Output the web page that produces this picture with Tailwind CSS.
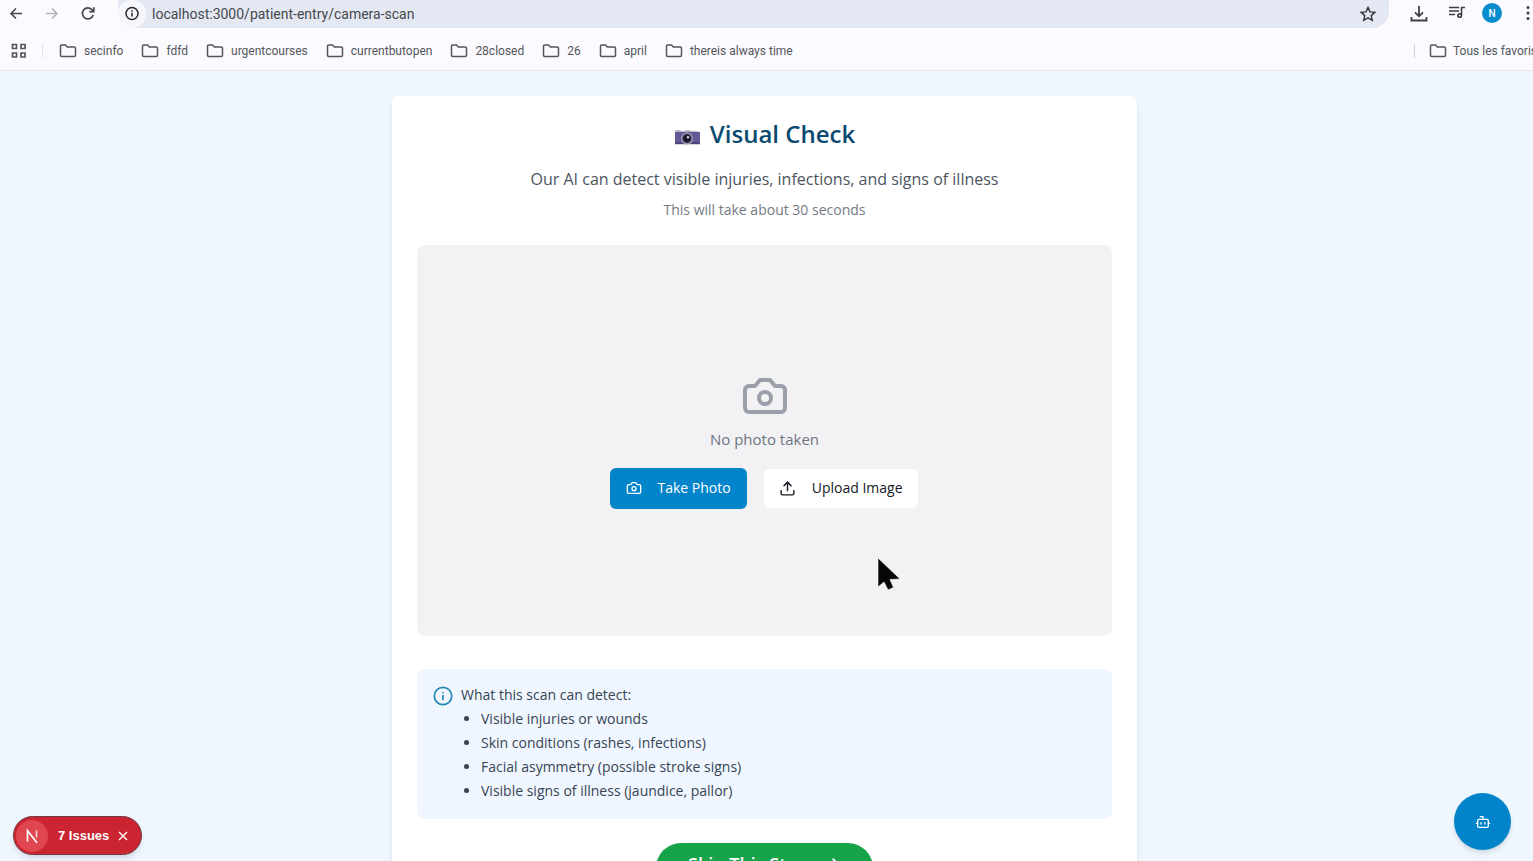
<!DOCTYPE html>
<html lang="en">
<head>
<meta charset="utf-8">
<meta name="viewport" content="width=device-width, initial-scale=1">
<title>Visual Check</title>
<script src="https://cdn.jsdelivr.net/npm/@tailwindcss/browser@4"></script>
</head>
<body class="relative flex h-screen flex-col overflow-hidden bg-[#eff7fe] font-['Open_Sans',sans-serif]">

<svg class="hidden" aria-hidden="true">
  <symbol id="folder" viewBox="0 0 18 16"><path d="M1.500 3.200c0-.7.5-1.200 1.200-1.200h3.800l1.800 2h7c.7 0 1.200.5 1.200 1.200v7.100c0 .7-.5 1.200-1.200 1.200H2.700c-.7 0-1.200-.5-1.200-1.200z" fill="none" stroke="currentColor" stroke-width="1.500" stroke-linejoin="round"/></symbol>
  <symbol id="camera" viewBox="0 0 24 24"><g fill="none" stroke="currentColor" stroke-width="2" stroke-linecap="round" stroke-linejoin="round"><path d="M14.500 4h-5L7 7H4a2 2 0 0 0-2 2v9a2 2 0 0 0 2 2h16a2 2 0 0 0 2-2V9a2 2 0 0 0-2-2h-3l-2.500-3z"/><circle cx="12" cy="13" r="3"/></g></symbol>
</svg>

<!-- Browser toolbar -->
<header class="shrink-0 border-b border-[#e3e6ee] bg-[#fbfaff] font-[Roboto,sans-serif] text-[#54565a]">
  <div class="flex h-7 items-center">
    <div class="flex w-[118px] items-center gap-5 pl-2 text-[#454749]">
      <button aria-label="Back"><svg class="size-4" viewBox="0 0 16 16" fill="none" stroke="currentColor" stroke-width="1.600"><path d="M14 7.500H3M8 2.500l-5 5 5 5"/></svg></button>
      <button aria-label="Forward" class="text-[#b4b5ba]"><svg class="size-4" viewBox="0 0 16 16" fill="none" stroke="currentColor" stroke-width="1.600"><path d="M2 7.500h11M8 2.500l5 5-5 5"/></svg></button>
      <button aria-label="Reload"><svg class="size-4" viewBox="0 0 16 16" fill="none" stroke="currentColor" stroke-width="1.700"><path d="M13.200 9A5.500 5.500 0 1 1 12.300 4L13.500 5.500"/><path d="M13.800 1.300v4.400H9.400"/></svg></button>
    </div>
    <div class="flex h-7 flex-1 items-center rounded-b-2xl bg-[#e4e8f3] pr-3">
      <span class="flex size-7 shrink-0 items-center justify-center rounded-full bg-[#f6f7fc] text-[#28292c]"><svg class="size-4" viewBox="0 0 16 16" fill="none" stroke="currentColor" stroke-width="1.500"><circle cx="8" cy="7.500" r="6"/><path d="M8 6.800v3.700M8 4.200v1.500"/></svg></span>
      <input aria-label="Address" class="ml-1.5 min-w-0 flex-1 bg-transparent text-sm text-[#45484d] outline-none" value="localhost:3000/patient-entry/camera-scan">
      <button aria-label="Bookmark this page" class="text-[#33343a]"><svg class="size-[18px]" viewBox="0 0 18 18" fill="none" stroke="currentColor" stroke-width="1.400"><path d="M9 2.400l2 4.500 4.900.5-3.700 3.200 1.100 4.800L9 12.900l-4.300 2.500 1.100-4.800L2.100 7.400 7 6.900z"/></svg></button>
    </div>
    <div class="flex w-[144px] shrink-0 items-center pb-0.5 pl-[21px] text-[#3d3e43]">
      <button aria-label="Downloads" class="shrink-0"><svg class="size-[18px]" viewBox="0 0 18 18" fill="none" stroke="currentColor" stroke-width="1.800"><path d="M9 2v10M5 8.300l4 4 4-4M1.500 13v3.500h15V13"/></svg></button>
      <button aria-label="Media controls" class="ml-5 shrink-0"><svg class="size-[18px]" viewBox="0 0 18 18" fill="none" stroke="currentColor" stroke-width="1.600"><path d="M1 3.500h10M1 7h10M1 10.500h6M13.500 11V3.500H17"/><circle cx="11.700" cy="11.500" r="1.800"/></svg></button>
      <button aria-label="Profile" class="ml-4 flex size-5 shrink-0 items-center justify-center rounded-full bg-[#078dcb] text-[10px] font-medium text-white">N</button>
      <button aria-label="Menu" class="ml-[17px] shrink-0"><svg class="size-[18px]" viewBox="0 0 18 18" fill="currentColor"><circle cx="9" cy="3.500" r="1.500"/><circle cx="9" cy="9" r="1.500"/><circle cx="9" cy="14.500" r="1.500"/></svg></button>
    </div>
  </div>
  <nav aria-label="Bookmarks" class="flex h-[42px] items-center overflow-hidden pt-[3px] pl-2.5 text-xs whitespace-nowrap">
    <button aria-label="Apps"><svg class="size-[18px]" viewBox="0 0 18 18" fill="none" stroke="currentColor" stroke-width="1.700"><path d="M2.500 2.500h4v4h-4zM11 2.500h4v4h-4zM2.500 11h4v4h-4zM11 11h4v4h-4z"/></svg></button>
    <span class="ml-3.5 h-3.5 w-px bg-[#e3e4ee]"></span>
    <div class="ml-4 flex flex-1 items-center gap-[18px]">
      <a href="#" class="flex items-center gap-[7px]"><svg class="h-4 w-[18px]"><use href="#folder"/></svg>secinfo</a>
      <a href="#" class="flex items-center gap-[7px]"><svg class="h-4 w-[18px]"><use href="#folder"/></svg>fdfd</a>
      <a href="#" class="flex items-center gap-[7px]"><svg class="h-4 w-[18px]"><use href="#folder"/></svg>urgentcourses</a>
      <a href="#" class="flex items-center gap-[7px]"><svg class="h-4 w-[18px]"><use href="#folder"/></svg>currentbutopen</a>
      <a href="#" class="flex items-center gap-[7px]"><svg class="h-4 w-[18px]"><use href="#folder"/></svg>28closed</a>
      <a href="#" class="flex items-center gap-[7px]"><svg class="h-4 w-[18px]"><use href="#folder"/></svg>26</a>
      <a href="#" class="flex items-center gap-[7px]"><svg class="h-4 w-[18px]"><use href="#folder"/></svg>april</a>
      <a href="#" class="flex items-center gap-[7px]"><svg class="h-4 w-[18px]"><use href="#folder"/></svg>thereis always time</a>
    </div>
    <div class="flex w-[119px] shrink-0 items-center">
      <span class="h-3.5 w-px shrink-0 bg-[#cfd0da]"></span>
      <a href="#" class="ml-3.5 flex shrink-0 items-center gap-1.5"><svg class="h-4 w-[18px] shrink-0"><use href="#folder"/></svg>Tous les favoris</a>
    </div>
  </nav>
</header>

<main class="min-h-0 flex-1 overflow-hidden pt-[25px] pr-1">
  <section class="mx-auto max-w-[745px] rounded-lg bg-white px-[25px] py-6 shadow-md">
    <div class="text-center">
      <h1 class="flex items-center justify-center gap-2.5 text-2xl leading-7 font-semibold text-[#0b4a6f]">
        <svg class="mt-2 h-[18px] w-[26px]" viewBox="0 0 26 18" aria-hidden="true"><path d="M2 1h4l1 1h3l2-1h3l2 1h7v3H1V2z" fill="#b9b6c8"/><rect x="1" y="3" width="25" height="12" fill="#635994"/><path d="M1 13h25v2H1z" fill="#4e467b"/><path d="M1 15h25v1H1z" fill="#d6d4e0"/><circle cx="13" cy="9.500" r="6" fill="#a9a5bd"/><circle cx="13" cy="9.500" r="4.700" fill="#332f48"/><circle cx="13" cy="9.500" r="3" fill="#15131f"/><circle cx="14" cy="8.200" r="1.200" fill="#d9d9ea"/></svg>
        Visual Check
      </h1>
      <p class="mt-[18px] text-base leading-[26px] text-[#4c5561]">Our AI can detect visible injuries, infections, and signs of illness</p>
      <p class="mt-2 text-sm leading-5 text-[#757b84]">This will take about 30 seconds</p>
    </div>

    <div class="mt-[25px] flex aspect-video flex-col items-center justify-center rounded-lg bg-[#f2f2f5]">
      <svg class="size-12 text-[#9a9fa9]"><use href="#camera"/></svg>
      <p class="mt-[7px] text-[15px] leading-6 text-[#6f7580]">No photo taken</p>
      <div class="mt-[17px] flex gap-4 text-sm font-medium">
        <button class="flex h-[41px] items-center gap-[15px] rounded-md bg-[#0284cb] px-4 text-white"><svg class="size-4"><use href="#camera"/></svg>Take Photo</button>
        <button class="flex h-[41px] items-center gap-4 rounded-md border border-[#f0f1f4] bg-white px-[15px] text-[#14181f]"><svg class="size-[17px]" viewBox="0 0 24 24" fill="none" stroke="currentColor" stroke-width="2" stroke-linecap="round" stroke-linejoin="round"><path d="M21 15v4a2 2 0 0 1-2 2H5a2 2 0 0 1-2-2v-4M17 8l-5-5-5 5M12 3v12"/></svg>Upload Image</button>
      </div>
    </div>

    <div class="mt-[33px] flex gap-2 rounded-lg bg-[#eff6ff] p-4 text-sm text-[#374553]">
      <svg class="mt-px size-5 shrink-0 text-[#2388b4]" viewBox="0 0 20 20" fill="none" stroke="currentColor" stroke-width="1.700" stroke-linecap="round"><circle cx="10" cy="10" r="8.700"/><path d="M10 9.500v4M10 6.500v.1"/></svg>
      <div>
        <p class="leading-5">What this scan can detect:</p>
        <ul class="mt-0.5 list-disc pl-5 leading-6">
          <li>Visible injuries or wounds</li>
          <li>Skin conditions (rashes, infections)</li>
          <li>Facial asymmetry (possible stroke signs)</li>
          <li>Visible signs of illness (jaundice, pallor)</li>
        </ul>
      </div>
    </div>

    <div class="mt-6 flex justify-center">
      <button class="flex h-[50px] items-center gap-4 rounded-full bg-[#17a34a] px-8 pb-2 text-lg font-semibold text-white">Skip This Step<svg class="size-[17px]" viewBox="0 0 24 24" fill="none" stroke="currentColor" stroke-width="2.500" stroke-linecap="round" stroke-linejoin="round"><path d="M5 12h14M13 6l6 6-6 6"/></svg></button>
    </div>
  </section>
</main>

<!-- Dev issues badge -->
<div class="absolute bottom-[6px] left-[13px] flex h-[39px] items-center rounded-full border border-[#6e3a45] bg-[#cb2531] pr-3 pl-0.5 font-['Liberation_Sans',sans-serif] text-white shadow-md">
  <span class="flex size-8 items-center justify-center rounded-full bg-[#df4650]"><svg class="size-4" viewBox="0 0 16 16" fill="none" stroke="currentColor" stroke-width="1.700"><path d="M3.500 13.500V2.800l9.500 12"/><path d="M12.500 2.300v7.200" stroke-opacity=".75"/></svg></span>
  <button class="ml-2.5 text-[13px] font-bold">7 Issues</button>
  <button aria-label="Dismiss" class="ml-2"><svg class="size-3" viewBox="0 0 12 12" fill="none" stroke="currentColor" stroke-width="1.400"><path d="M2 2l8 8M10 2l-8 8"/></svg></button>
</div>

<!-- Assistant button -->
<button aria-label="Open assistant" class="absolute right-[22px] bottom-[11px] flex size-[57px] items-center justify-center rounded-full bg-[#0284cb] text-white shadow-md">
  <svg class="size-4" viewBox="0 0 24 24" fill="none" stroke="currentColor" stroke-width="2" stroke-linecap="round" stroke-linejoin="round"><path d="M12 8V4H8M2 14h2M20 14h2M15 13v2M9 13v2"/><rect x="4" y="8" width="16" height="12" rx="2"/></svg>
</button>

<!-- Pointer -->
<svg class="pointer-events-none absolute top-[556px] left-[876px] h-9 w-7" viewBox="0 0 28 36" aria-hidden="true"><path d="M2 2v29l6-5 4 8 5.500-2.500-3.500-8 10-.5z" fill="#070707" stroke="#fff" stroke-width=".6"/></svg>
</body>
</html>
